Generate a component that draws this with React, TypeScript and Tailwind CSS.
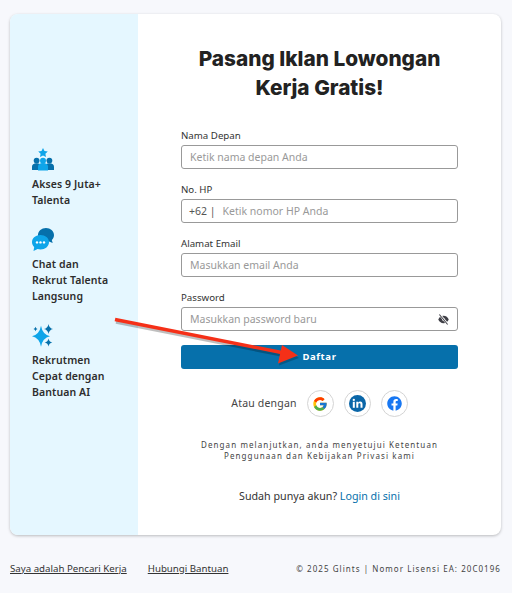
import React from 'react';
import { FcGoogle } from 'react-icons/fc';
import { FaFacebook } from 'react-icons/fa';

const TalentIcon = () => (
  <svg className="w-[22px] h-[23px]" viewBox="0 0 22 23">
    <path fill="#0ea5e9" d="M11 0l1.500 3 3.300.5-2.400 2.300.6 3.300-3-1.600-3 1.600.6-3.300-2.400-2.300 3.300-.5z" />
    <circle cx="4.600" cy="12.600" r="2.900" fill="#0670ab" />
    <circle cx="17.400" cy="12.600" r="2.900" fill="#0670ab" />
    <path fill="#0670ab" d="M0 22v-3.300c0-2.200 1.600-3.400 4.600-3.400s4.600 1.200 4.600 3.400V22zM12.800 22v-3.300c0-2.200 1.600-3.400 4.600-3.400S22 16.500 22 18.700V22z" />
    <circle cx="11" cy="12.800" r="3" fill="#0ea5e9" />
    <path fill="#0ea5e9" d="M6 22.500v-4c0-2.200 1.900-3.400 5-3.400s5 1.200 5 3.400v4z" />
  </svg>
);

const ChatIcon = () => (
  <svg className="w-[22px] h-[23px]" viewBox="0 0 22 23">
    <path fill="#0670ab" d="M14 0c4.400 0 8 3 8 7 0 2-.8 3.700-2.200 5l.9 3-3.700-1.500C15.900 14 15 14 14 14c-4.400 0-8-3-8-7s3.600-7 8-7z" />
    <path fill="#0ea5e9" d="M8.500 7c4.700 0 8.500 3.100 8.500 7.200s-3.800 7.200-8.500 7.200c-1 0-2-.1-2.900-.4L1.500 23l.7-4.100C.8 17.600 0 16 0 14.200 0 10.100 3.800 7 8.500 7z" />
    <circle cx="5" cy="14.400" r="1.200" fill="#fff" />
    <circle cx="8.500" cy="14.400" r="1.200" fill="#fff" />
    <circle cx="12" cy="14.400" r="1.200" fill="#fff" />
  </svg>
);

const SparkleIcon = () => (
  <svg className="w-[22px] h-[23px]" viewBox="0 0 22 23">
    <path fill="#0ea5e9" d="M9 1.800Q10.500 10.500 18 12.300 10.500 14 9 22.800 7.500 14 0 12.300 7.500 10.500 9 1.800z" />
    <path fill="#0670ab" d="M16.500 0Q17.200 4.200 21 5 17.200 5.800 16.500 10 15.800 5.800 12 5 15.800 4.200 16.500 0z" />
    <path fill="#0670ab" d="M16.500 14.600Q17.100 18 20.300 18.500 17.100 19 16.500 22.400 15.900 19 12.700 18.500 15.900 18 16.500 14.600z" />
    <path fill="#0670ab" d="M3.500 2.800Q3.900 4.700 5.500 5 3.900 5.300 3.500 7.200 3.100 5.300 1.500 5 3.100 4.700 3.500 2.800z" />
  </svg>
);

const EyeOffIcon = () => (
  <svg className="w-[11px] h-[11px]" viewBox="0 0 12 12">
    <path fill="#3f3f46" d="M6 2C3.300 2 1.200 3.700.3 6c.9 2.300 3 4 5.700 4s4.800-1.700 5.700-4C10.800 3.700 8.700 2 6 2z" />
    <circle cx="6" cy="6" r="1.500" fill="#fff" />
    <path stroke="#fff" strokeWidth="2.400" d="M2 .8l8.500 10.400" />
    <path stroke="#3f3f46" strokeWidth="1.100" d="M1.500.6l9 10.800" />
  </svg>
);

const LinkedInIcon = () => (
  <svg className="w-[17px] h-[17px]" viewBox="0 0 17 17">
    <circle cx="8.500" cy="8.500" r="8.500" fill="#0a66a8" />
    <rect x="3.800" y="6.800" width="2" height="6" fill="#fff" />
    <circle cx="4.800" cy="4.900" r="1.150" fill="#fff" />
    <path fill="#fff" d="M7.300 6.800h1.900v.9c.4-.7 1.100-1.100 2-1.100 1.600 0 2.300 1 2.300 2.700v3.500h-2V9.600c0-.8-.3-1.300-1-1.300-.8 0-1.200.5-1.200 1.400v3.100h-2z" />
  </svg>
);

const perks = [
  { Icon: TalentIcon, lines: ['Akses 9 Juta+', 'Talenta'] },
  { Icon: ChatIcon, lines: ['Chat dan', 'Rekrut Talenta', 'Langsung'] },
  { Icon: SparkleIcon, lines: ['Rekrutmen', 'Cepat dengan', 'Bantuan AI'] },
];

const Field = ({ label, children }: { label: string; children: React.ReactNode }) => (
  <div className="flex flex-col">
    <label className="text-[9.700px] leading-[16px] pt-[1px] mb-[1px] text-[#333]">{label}</label>
    <div className="flex items-center h-[24px] rounded-[3px] border border-[#999] px-[8px] pt-[1px] text-[10.500px] bg-white">
      {children}
    </div>
  </div>
);

const Placeholder = ({ children }: { children: React.ReactNode }) => (
  <span className="text-[#999]">{children}</span>
);

export default function App() {
  return (
    <div className="relative min-h-[593px] bg-[#f7f8fc] px-[10px] pt-[14px] font-['Noto_Sans','Open_Sans',sans-serif] text-[#333] overflow-hidden">
      <div className="flex h-[521px] w-[491px] rounded-[8px] overflow-hidden bg-white shadow-[0_1px_3px_rgba(0,0,0,0.25)]">
        <div className="w-[128px] shrink-0 bg-[#e5f7ff] pl-[22px] pb-[2px] flex flex-col justify-center gap-[20px]">
          {perks.map(({ Icon, lines }) => (
            <div key={lines[0]} className="flex flex-col">
              <div className="mb-[4px] h-[24px]"><Icon /></div>
              {lines.map((l) => (
                <div key={l} className="text-[10.500px] leading-[16px] font-semibold text-[#2d2d2d] tracking-[0.1px]">{l}</div>
              ))}
            </div>
          ))}
        </div>

        <div className="flex-1 px-[43px] pt-[30px]">
          <h1 className="text-center text-[20.800px] leading-[29px] font-extrabold text-[#222] font-['Inter',sans-serif]">
            Pasang Iklan Lowongan
            <br />
            Kerja Gratis!
          </h1>

          <div className="mt-[25px] flex flex-col gap-[12px]">
            <Field label="Nama Depan"><Placeholder>Ketik nama depan Anda</Placeholder></Field>
            <Field label="No. HP">
              <span className="text-[#555] ml-[-1px] mr-[7px]">+62 |</span>
              <Placeholder>Ketik nomor HP Anda</Placeholder>
            </Field>
            <Field label="Alamat Email"><Placeholder>Masukkan email Anda</Placeholder></Field>
            <Field label="Password">
              <Placeholder>Masukkan password baru</Placeholder>
              <span className="ml-auto"><EyeOffIcon /></span>
            </Field>
          </div>

          <button className="mt-[14px] w-full h-[24px] rounded-[3px] bg-[#0670ab] text-white text-[9.500px] font-bold tracking-[0.6px]">
            Daftar
          </button>

          <div className="mt-[21px] flex items-center justify-center gap-[10px]">
            <span className="text-[10.500px] tracking-[0.2px] text-[#444]">Atau dengan</span>
            <span className="w-[27px] h-[27px] rounded-full border border-[#d4d4d4] flex items-center justify-center"><FcGoogle className="w-[16px] h-[16px]" /></span>
            <span className="w-[27px] h-[27px] rounded-full border border-[#d4d4d4] flex items-center justify-center"><LinkedInIcon /></span>
            <span className="w-[27px] h-[27px] rounded-full border border-[#d4d4d4] flex items-center justify-center"><FaFacebook className="w-[15px] h-[15px] text-[#1877f2]" /></span>
          </div>

          <p className="mt-[22px] text-center text-[8px] leading-[11px] tracking-[1.1px] text-[#444]">
            Dengan melanjutkan, anda menyetujui Ketentuan
            <br />
            Penggunaan dan Kebijakan Privasi kami
          </p>

          <p className="mt-[27px] text-center text-[10.700px] leading-[16px] text-[#333]">
            Sudah punya akun? <span className="text-[#0670ab]">Login di sini</span>
          </p>
        </div>
      </div>

      <div className="mt-[26px] flex items-center text-[9.700px] leading-[16px]">
        <span className="underline text-[#333]">Saya adalah Pencari Kerja</span>
        <span className="underline text-[#333] ml-[21px]">Hubungi Bantuan</span>
        <span className="ml-auto mr-[1px] text-[8px] tracking-[1.05px] text-[#444]">© 2025 Glints | Nomor Lisensi EA: 20C0196</span>
      </div>

      {/* red annotation arrow sits on top of the page */}
      <svg className="absolute left-0 top-0 w-[512px] h-[593px] pointer-events-none" viewBox="0 0 512 593">
        <path d="M115 320L284 353.500" stroke="#000" strokeOpacity="0.25" strokeWidth="3.500" transform="translate(1 2)" />
        <path d="M298 356L278 363.500L282 345z" fill="#000" fillOpacity="0.2" transform="translate(1 2)" />
        <path d="M115 319.500L284 353" stroke="#f53018" strokeWidth="3.500" />
        <path d="M298 355.500L278 363.500L282 345z" fill="#f53018" />
      </svg>
    </div>
  );
}
